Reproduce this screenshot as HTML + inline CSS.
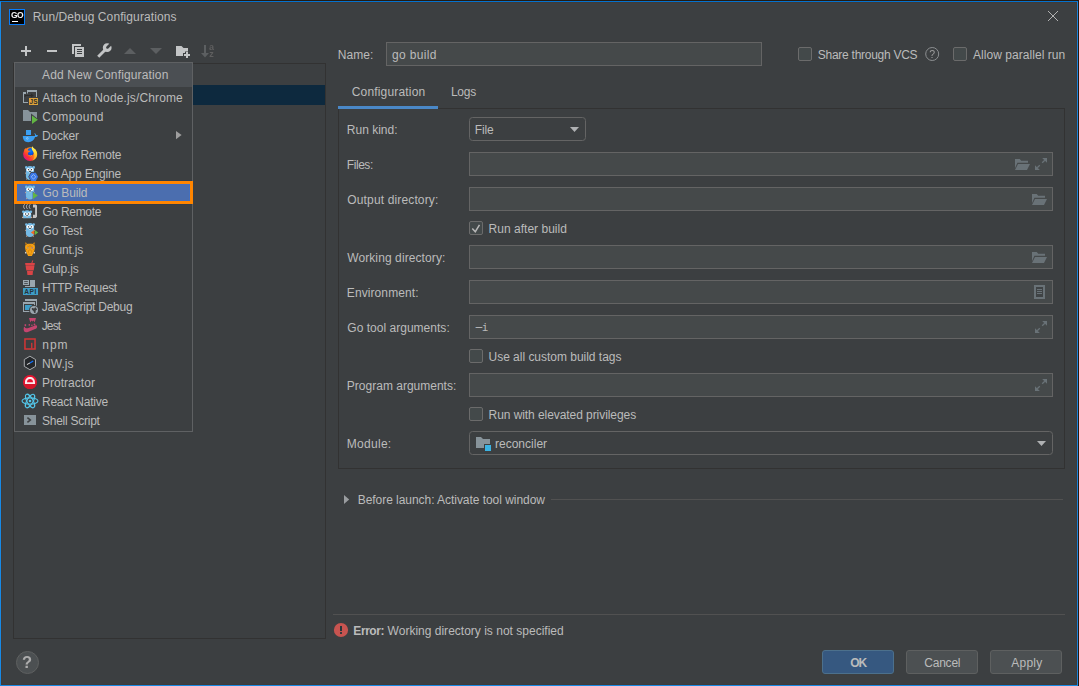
<!DOCTYPE html>
<html><head><meta charset="utf-8"><title>Run/Debug Configurations</title>
<style>
*{box-sizing:border-box;margin:0;padding:0}
html,body{width:1079px;height:686px;overflow:hidden;background:#3c3f41}
body{position:relative;font-family:"Liberation Sans",sans-serif;font-size:12px;color:#bbbbbb}
.a,.t,.in,.cb,.btn,svg{position:absolute}
.t{white-space:nowrap;line-height:16px;height:16px}
.in{background:#45494a;border:1px solid #646464;height:24px;left:469px;width:584px}
.co{background:#3c3f41;border-radius:3.5px}
.cb{width:14px;height:14px;background:#43494a;border:1px solid #6b6b6b;border-radius:2px}
.btn{height:24px;width:72px;border-radius:3px;border:1px solid #5e6060;background:#4c5052;top:650px}
</style></head><body>
<!-- window frame -->
<div class="a" style="left:0;top:0;width:1079px;height:1px;background:#241b12"></div>
<div class="a" style="left:1078px;top:0;width:1px;height:686px;background:#221a12"></div>
<div class="a" style="left:0;top:1px;width:1078px;height:685px;border:1px solid #1789e5;border-top-color:#0372cf;border-right-color:#1a83dc"></div>
<div class="a" style="left:1px;top:2px;width:1076px;height:683px;border:1px solid #403b38"></div>

<!-- title bar -->
<div class="a" style="left:9px;top:9px;width:16px;height:16px;background:#000;border:1px solid #087cfa"></div>
<div class="t" style="left:11px;top:9px;font-size:8.5px;font-weight:bold;color:#f4f4f4;line-height:12px;height:12px;letter-spacing:-0.5px;filter:grayscale(1)">GO</div>
<div class="a" style="left:12px;top:21px;width:6px;height:1px;background:#fff"></div>
<div class="t" style="left:32.85px;top:9px;letter-spacing:0.096px;">Run/Debug Configurations</div>

<!-- configurations tree -->
<div class="a" style="left:13px;top:63px;width:313px;height:576px;border:1px solid #323232"></div>
<div class="a" style="left:14px;top:85px;width:311px;height:20px;background:#0d293e"></div>

<!-- add new configuration popup -->
<div class="a" style="left:14px;top:62px;width:179px;height:370px;background:#3c3f41;border:1px solid #5f6163"></div>
<div class="a" style="left:15px;top:63px;width:177px;height:24px;background:#4b4f53"></div>
<div class="t" style="left:42.07px;top:67px;letter-spacing:0.143px;">Add New Configuration</div>
<div class="a" style="left:15px;top:180px;width:177px;height:25px;background:#333d49"></div>
<div class="a" style="left:14px;top:181px;width:179px;height:23px;background:#4b6eaf;border:3px solid #ff8500;box-shadow:inset 0 0 0 1px #426fc0"></div>
<div class="t" style="left:42.27px;top:90px;letter-spacing:0.134px;">Attach to Node.js/Chrome</div><div class="t" style="left:42.31px;top:109px;letter-spacing:0.351px;">Compound</div><div class="t" style="left:41.95px;top:128px;letter-spacing:-0.173px;">Docker</div><div class="t" style="left:41.95px;top:147px;letter-spacing:-0.193px;">Firefox Remote</div><div class="t" style="left:42.5px;top:166px;letter-spacing:-0.163px;">Go App Engine</div><div class="t" style="left:42.5px;top:185px;letter-spacing:-0.165px;">Go Build</div><div class="t" style="left:42.5px;top:204px;letter-spacing:-0.305px;">Go Remote</div><div class="t" style="left:42.5px;top:223px;letter-spacing:-0.19px;">Go Test</div><div class="t" style="left:42.5px;top:242px;letter-spacing:-0.188px;">Grunt.js</div>
<div class="t" style="left:42.5px;top:261px;letter-spacing:-0.198px;">Gulp.js</div><div class="t" style="left:41.95px;top:280px;letter-spacing:-0.354px;">HTTP Request</div><div class="t" style="left:41.69px;top:299px;letter-spacing:-0.256px;">JavaScript Debug</div><div class="t" style="left:41.69px;top:318px;letter-spacing:-0.844px;">Jest</div><div class="t" style="left:42.23px;top:337px;letter-spacing:0.985px;">npm</div><div class="t" style="left:41.95px;top:356px;letter-spacing:0.089px;">NW.js</div><div class="t" style="left:41.95px;top:375px;letter-spacing:0.035px;">Protractor</div><div class="t" style="left:41.95px;top:394px;letter-spacing:-0.219px;">React Native</div><div class="t" style="left:42.03px;top:413px;letter-spacing:-0.256px;">Shell Script</div>

<!-- name row -->
<div class="t" style="left:337.85px;top:47px;letter-spacing:0.036px;">Name:</div>
<div class="in" style="left:386px;top:42px;width:376px"></div>
<div class="t" style="left:392.05px;top:47px;letter-spacing:0.328px;">go build</div>
<div class="cb" style="left:798px;top:47px"></div><div class="t" style="left:817.83px;top:47px;letter-spacing:-0.269px;">Share through VCS</div>
<div class="cb" style="left:953px;top:47px"></div><div class="t" style="left:973.07px;top:47px;letter-spacing:0.045px;">Allow parallel run</div>

<!-- tabs -->
<div class="t" style="left:351.71px;top:84px;letter-spacing:0.177px;">Configuration</div><div class="t" style="left:450.95px;top:84px;letter-spacing:-0.256px;">Logs</div>
<div class="a" style="left:338px;top:108px;width:727px;height:361px;border:1px solid #323232"></div>
<div class="a" style="left:338px;top:106px;width:100px;height:3px;background:#4a88c7"></div>

<!-- form -->
<div class="t" style="left:346.85px;top:122px;letter-spacing:-0.008px;">Run kind:</div>
<div class="in co" style="top:117px;width:117px"></div><div class="t" style="left:474.75px;top:122px;letter-spacing:-0.098px;">File</div>
<div class="t" style="left:346.85px;top:157px;letter-spacing:-0.453px;">Files:</div><div class="in" style="top:152px"></div>
<div class="t" style="left:347.33px;top:192px;letter-spacing:0.141px;">Output directory:</div><div class="in" style="top:187px"></div>
<div class="cb" style="left:469px;top:221px"></div><div class="t" style="left:488.55px;top:221px;letter-spacing:0.021px;">Run after build</div>
<div class="t" style="left:347.19px;top:250px;letter-spacing:0.1px;">Working directory:</div><div class="in" style="top:245px"></div>
<div class="t" style="left:346.85px;top:285px;letter-spacing:0.085px;">Environment:</div><div class="in" style="top:280px"></div>
<div class="t" style="left:347.3px;top:320px;letter-spacing:0.022px;">Go tool arguments:</div><div class="in" style="top:315px"></div><div class="t" style="left:473.5px;top:320px;font-family:'DejaVu Sans Mono','Liberation Mono',monospace;font-size:11px"><span style="display:inline-block;transform:translate(0,-1px) scaleX(2.4);transform-origin:2.1px 50%">-</span><span style="margin-left:1.7px">i</span></div>
<div class="cb" style="left:469px;top:349px"></div><div class="t" style="left:488.53px;top:349px;letter-spacing:-0.019px;">Use all custom build tags</div>
<div class="t" style="left:346.85px;top:378px;letter-spacing:0.003px;">Program arguments:</div><div class="in" style="top:373px"></div>
<div class="cb" style="left:469px;top:407px"></div><div class="t" style="left:488.55px;top:407px;letter-spacing:-0.066px;">Run with elevated privileges</div>
<div class="t" style="left:346.85px;top:436px;letter-spacing:0.272px;">Module:</div><div class="in co" style="top:431px"></div><div class="t" style="left:494.94px;top:436px;letter-spacing:0.017px;">reconciler</div>

<!-- before launch -->
<div class="t" style="left:357.75px;top:492px;letter-spacing:-0.047px;">Before launch: Activate tool window</div>
<div class="a" style="left:551px;top:499px;width:512px;height:1px;background:#515151"></div>

<!-- bottom -->
<div class="a" style="left:333px;top:614px;width:732px;height:1px;background:#515151"></div>
<div class="t" style="left:353.34px;top:623px;letter-spacing:-0.437px;font-weight:bold;">Error:</div><div class="t" style="left:387.59px;top:623px;letter-spacing:0.008px;">Working directory is not specified</div>
<div class="a" style="left:16px;top:651px;width:23px;height:23px;border-radius:12px;background:#4c5052;border:1px solid #5e6060"></div>
<div class="t" style="left:17px;width:20px;text-align:center;top:652px;font-size:16.5px;font-weight:bold;color:#adadad;line-height:20px;height:20px;filter:grayscale(1)">?</div>
<div class="btn" style="left:822px;background:#365880;border-color:#4c708c"></div><div class="t" style="left:850.16px;top:655px;letter-spacing:-0.961px;font-weight:bold;">OK</div>
<div class="btn" style="left:906px"></div><div class="t" style="left:924.31px;top:655px;letter-spacing:-0.231px;">Cancel</div>
<div class="btn" style="left:990px"></div><div class="t" style="left:1011.17px;top:655px;letter-spacing:0.281px;">Apply</div>
<svg style="left:0;top:0" width="1079" height="686" viewBox="0 0 1079 686">
<defs><g id="gopher">
<circle cx="1.3" cy="1.9" r="1.3" fill="#74b9e4"/><circle cx="8.7" cy="1.9" r="1.3" fill="#74b9e4"/>
<path d="M0.9 5c0-3 1.8-4.6 4.1-4.6s4.1 1.6 4.1 4.6v6c0 2.4-1.8 3.4-4.1 3.4s-4.1-1-4.1-3.4z" fill="#74b9e4"/>
<circle cx="0.6" cy="7.6" r="0.55" fill="#d9a88c"/><circle cx="9.4" cy="7.6" r="0.55" fill="#d9a88c"/>
<circle cx="1.7" cy="13.6" r="0.6" fill="#d9a88c"/><circle cx="8.3" cy="13.6" r="0.6" fill="#d9a88c"/>
<circle cx="3.2" cy="4.2" r="1.75" fill="#fff"/><circle cx="6.8" cy="4.2" r="1.75" fill="#fff"/>
<circle cx="3.5" cy="4.2" r="0.65" fill="#333"/><circle cx="6.5" cy="4.2" r="0.65" fill="#333"/>
<ellipse cx="5" cy="6.6" rx="0.9" ry="0.8" fill="#e8e8e8"/>
<ellipse cx="5" cy="5.9" rx="0.9" ry="0.55" fill="#333"/>
</g>
<linearGradient id="ffg" x1="0.9" y1="0.2" x2="0.1" y2="0.85"><stop offset="0" stop-color="#ffb52a"/><stop offset="0.4" stop-color="#ff7a16"/><stop offset="0.75" stop-color="#ff2a3c"/><stop offset="1" stop-color="#d3129a"/></linearGradient>
<radialGradient id="ffb" cx="0.5" cy="0.35" r="0.7"><stop offset="0" stop-color="#0a7cff"/><stop offset="0.7" stop-color="#0050e0"/><stop offset="1" stop-color="#2a1fa0"/></radialGradient>
<clipPath id="gr"><rect x="20" y="209" width="14" height="9.2"/></clipPath>
<linearGradient id="ffy" x1="0.3" y1="0" x2="0.6" y2="1"><stop offset="0" stop-color="#fff45a"/><stop offset="0.55" stop-color="#ffd530"/><stop offset="1" stop-color="#ff9a1a"/></linearGradient>
<linearGradient id="ffo" x1="0.7" y1="0" x2="0.2" y2="1"><stop offset="0" stop-color="#ff9d1c"/><stop offset="0.5" stop-color="#ff5a22"/><stop offset="1" stop-color="#f0203c"/></linearGradient>
</defs>

<!-- 1 attach to node -->
<g fill="#9aa6ae">
<path d="M27 90h10v7h-1v-5h-8v1.5h-1z"/>
<path d="M23 92h3v2h-2v8h4v1h-5z"/>
</g>
<path d="M25 97v-1.5h6.5" stroke="#2b2b2b" stroke-width="1" fill="none"/><path d="M31 93.4l2.8 2.1-2.8 2.1z" fill="#2b2b2b"/>
<rect x="29" y="98" width="9" height="7" fill="#dea33b"/>
<text x="33.5" y="104" font-size="6.4" font-weight="bold" text-anchor="middle" fill="#2b2b2b" font-family="Liberation Sans, sans-serif">JS</text>

<!-- 2 compound -->
<path d="M23 110h5l2 2h7v9h-14z" fill="#87939a"/>
<path d="M31 113.5l8 6.3-8 6z" fill="#3c3f41"/>
<path d="M32 115.5l5.9 4.3-5.9 4.3z" fill="#62b543"/>

<!-- 3 docker -->
<rect x="26" y="130" width="5" height="5" fill="#3a9ff2"/>
<path d="M22.8 136.1h12.1c0.3-1.5-0.1-2.4-0.7-3.2 1.1 0.3 1.8 1.1 2 2.2 0.7-0.1 1.3 0 1.8 0.4-0.6 1.2-1.6 1.6-2.9 1.5-1.1 3.4-3.4 5.2-6.9 5.2-3.6 0-5.4-2.3-5.4-6.1z" fill="#3a9ff2"/>
<circle cx="27.3" cy="138.4" r="0.9" fill="none" stroke="#bfe0fa" stroke-width="0.5"/>

<!-- 4 firefox -->
<circle cx="30" cy="154.1" r="6.9" fill="url(#ffg)"/>
<ellipse cx="30.6" cy="152" rx="3.1" ry="3.9" fill="url(#ffb)"/>
<path d="M32.2 146.2c0.6 1.1 1.5 1.8 2.6 2.8 1.5 1.4 2.4 3.1 2.4 5.2 0 1.7-0.6 3.2-1.6 4.4-0.9 1-2 1.7-3.2 2.1 1.5-1.6 2.2-3.3 2.1-5.3-0.1-1.8-0.9-3.2-1.9-4.6-0.9-1.3-1.2-2.7-0.4-4.6z" fill="url(#ffy)"/>
<path d="M24.5 149.6c0.3-0.6 0.7-1.1 1.1-1.5 0.2 0.8 0.5 1.2 1 1.6 0.8 0.1 1.5 0.4 2 1 0.7-0.1 1.4 0 2 0.4-0.7 0.7-1.9 0.8-2.4 1.7-0.6 1.1 0 2.3 1.2 2.7 1.3 0.4 2.6-0.1 3.4-0.9 0 2.2-1.9 3.6-4 3.3-2.6-0.3-4.4-2.5-4.5-5.1 0-1.2 0-2.2 0.2-3.2z" fill="url(#ffo)"/>
<path d="M28.2 155.3c1.5 0.6 2.9 0.4 4.1-0.4-0.6 1.4-2.6 1.9-4.1 0.4z" fill="#ffd43a"/>

<!-- 5 go app engine -->
<use href="#gopher" x="25" y="165.5"/>
<path d="M28.3 176.8l2.6-4.7h5.2l2.6 4.7-2.3 4.2h-5.8z" fill="#3c3f41"/>
<path d="M29 176.8l2.3-4.1h4.5l2.3 4.1-2.3 4.1h-4.5z" fill="#3b78e7"/>
<path d="M33.5 174.5l2.3 2.3-2.3 2.3-2.3-2.3z" fill="none" stroke="#8fb6f5" stroke-width="1"/>

<!-- 6 go build -->
<use href="#gopher" x="25" y="185"/>
<path d="M32.5 191.3l6.2 4.3-6.2 4.3z" fill="#4b6eaf"/>
<path d="M33 192.2l4.9 3.4-4.9 3.4z" fill="#62b543"/>

<!-- 7 go remote -->
<g fill="none" stroke="#bdbdbd" stroke-width="1"><path d="M24.6 204.3c-1.3 1.3-1.3 3.2 0 4.5"/><path d="M27.4 204.3c-1.3 1.3-1.3 3.2 0 4.5"/><path d="M30.2 204.3c-1.3 1.3-1.3 3.2 0 4.5"/></g>
<path d="M33 204.5h2.8l1.2 1v11.3l-1.2 1.2h-2.8v-3.2h2.1v-7.2h-2.1z" fill="#c4c4c4"/>
<g clip-path="url(#gr)"><g transform="translate(22,209.8) scale(1.02,1)"><use href="#gopher"/></g></g>
<circle cx="22.6" cy="217.4" r="0.6" fill="#d9a88c"/><circle cx="31.7" cy="217.4" r="0.6" fill="#d9a88c"/>

<!-- 8 go test -->
<use href="#gopher" x="25" y="222.6"/>
<path d="M34.3 229.9v5l-3.4-2.5z" fill="#f26a22"/>
<path d="M34.9 229.9v5.2l3.3-2.6z" fill="#62b543"/>

<!-- 9 grunt -->
<path d="M25.2 242.3c0.9 0.2 1.6 0.8 1.9 1.7l-1.4 1c-0.6-0.8-0.7-1.7-0.5-2.7z M34.8 242.3c-0.9 0.2-1.6 0.8-1.9 1.7l1.4 1c0.6-0.8 0.7-1.7 0.5-2.7z" fill="#c07a12"/>
<path d="M27.6 243.8h4.8l2.4 1.7c0.3 1.5 0.2 3-0.3 4.5l-1.1 3-1.5 2.9h-3.8l-1.5-2.9-1.1-3c-0.5-1.5-0.6-3-0.3-4.5z" fill="#f7a214"/>
<path d="M28.6 244.8l1.4 0.8 1.4-0.8M27.3 246l2.7 1 2.7-1M25.6 248.6l1.3 1.3M34.4 248.6l-1.3 1.3M28.4 250.2v2.6M31.6 250.2v2.6M30 248.5v2.5M28.4 254.2h3.2" stroke="#cf7f0c" stroke-width="0.7" fill="none"/>
<rect x="27.1" y="247.2" width="1.4" height="1.3" fill="#9a8f86"/><rect x="31.5" y="247.2" width="1.4" height="1.3" fill="#8a6fa8"/>
<path d="M24.9 251.6l2 1.3-1.5 0.9z M35.1 251.6l-2 1.3 1.5 0.9z" fill="#f4eee6"/>

<!-- 10 gulp -->
<g fill="#db4446">
<path d="M25.1 263h9.8l-0.3 1.9h-9.2z"/><path d="M25.5 265.2h9l-0.8 5.2h-7.4z"/><path d="M27 271h6l-0.4 4h-5.2z"/>
<path d="M31.1 263.4l1.3-3.2 0.9 0.3-1.2 3.2z"/>
</g>

<!-- 11 http request -->
<g fill="#9aa6ae"><rect x="23" y="280" width="6" height="5"/><path d="M30 280h5v7h-10v-1h5z"/></g>
<rect x="24.2" y="281.2" width="3.6" height="0.8" fill="#3c3f41"/><rect x="24.2" y="283" width="3.6" height="0.8" fill="#3c3f41"/>
<rect x="23" y="288" width="15" height="7" fill="#3e9dc7"/>
<text x="30.5" y="294.2" font-size="6.6" font-weight="bold" text-anchor="middle" fill="#263238" font-family="Liberation Sans, sans-serif" letter-spacing="0.5">API</text>

<!-- 12 js debug -->
<g fill="#9aa6ae"><path d="M25 299h12v7h-1v-5h-11z"/><path fill-rule="evenodd" d="M23 302h12v10h-12z M24 304h10v7h-10z"/></g>
<rect x="25" y="305" width="7" height="5" fill="#3e9dc7"/>
<circle cx="34" cy="310" r="4.9" fill="#3c3f41"/><circle cx="34" cy="310" r="4" fill="#9aa6ae"/>
<path d="M31.8 308.2c1-0.6 1.6 0.4 2.4 0.2 0.7-0.2 0.6-1.2 1.5-1 0.6 0.6 1.3 1.6 1.3 2.6-0.8-0.3-1.3 0.2-1.4 0.9-0.1 0.8 0.4 1.4-0.3 2.1-1.2 0.3-1.5-0.7-1.6-1.5-0.1-0.9-0.9-0.8-1.4-1.5-0.4-0.6-0.7-1.2-0.5-1.8z" fill="#3c3f41"/>

<!-- 13 jest -->
<g fill="#c4456f">
<path d="M29 318h7l-1.3 4.6-1.1-2.2-1.1 1.2-1.1-1.2-1.1 2.2z"/>
<rect x="24.6" y="324.2" width="1.5" height="2"/><circle cx="29.3" cy="324.9" r="0.8"/><circle cx="31.9" cy="325.3" r="0.8"/><circle cx="34.5" cy="324.5" r="0.9"/>
<path d="M23.7 328c0-0.7 0.5-1.2 1.1-1.1 0.5 1.4 1.6 1.7 2.9 1.3l7.5-2.8c1-0.3 1.9 0.2 1.9 1.3 0 1.2-0.8 1.9-2 2.4l-7.2 2.9c-1.6 0.6-3.1 0.4-3.8-0.7-0.5-0.9-0.5-2-0.4-3.3z"/>
</g>

<!-- 14 npm -->
<path fill-rule="evenodd" d="M24.2 338.2h11.6v11.6h-11.6z M25.7 339.7v8.6h8.6v-8.6z" fill="#d33636"/><rect x="31.1" y="342.8" width="1.3" height="5.6" fill="#d33636"/>

<!-- 15 nw.js -->
<path d="M29.9 356.2l5.6 3.3v6.9l-5.6 3.3-5.6-3.3v-6.9z" fill="#24272a" stroke="#a9abad" stroke-width="1"/>
<path d="M26.9 364.6l3.2-1.7" stroke="#dcdcdc" stroke-width="1"/><path d="M30 363l3.2-2" stroke="#1373ff" stroke-width="1.3"/>

<!-- 16 protractor -->
<circle cx="30" cy="382" r="7" fill="#e8132f"/>
<path d="M23.3 384h13.4a7 7 0 0 1-13.4 0z" fill="#d3172c"/>
<path fill-rule="evenodd" d="M25 384v-1.5c0-3.4 2.1-5.4 5-5.4s5 2 5 5.4v1.5z M27 382.2h6c0-2-1.3-3.1-3-3.1s-3 1.1-3 3.1z" fill="#fbeaed"/>

<!-- 17 react -->
<g fill="none" stroke="#53c7ea" stroke-width="1.1"><ellipse cx="30" cy="401" rx="8" ry="3.1"/><ellipse cx="30" cy="401" rx="7.6" ry="3" transform="rotate(60 30 401)"/><ellipse cx="30" cy="401" rx="7.6" ry="3" transform="rotate(120 30 401)"/></g>
<circle cx="30" cy="401" r="1.3" fill="#53c7ea"/>

<!-- 18 shell -->
<rect x="24" y="415" width="12" height="10" fill="#87939a"/>
<path d="M27.4 417.6l2.9 2.4-2.9 2.4" fill="none" stroke="#3c3f41" stroke-width="1.6"/>

<!-- docker submenu arrow -->
<path d="M176 131l5.6 4.1-5.6 4.1z" fill="#9e9e9e"/>

<!-- toolbar -->
<g fill="#c3c5c6">
<rect x="21" y="50" width="10" height="2"/><rect x="25" y="46" width="2" height="10"/>
<rect x="47" y="50" width="10" height="2"/>
<path d="M72 44h9v2h-7v8h-2z"/>
<path fill-rule="evenodd" d="M75 47h9v10h-9z M77 49v1h5v-1z M77 51v1h5v-1z M77 53v1h5v-1z"/>
<path d="M176 46h5.5l2 2h4.5v3.4h-3v1.6h-2v3h-7z"/><rect x="184" y="54" width="6" height="2"/><rect x="186" y="52" width="2" height="6"/>
</g>
<g transform="translate(107.2 47.7) rotate(-45)">
<rect x="-12.7" y="-1.45" width="12.7" height="2.9" fill="#c3c5c6"/>
<circle cx="0" cy="0" r="4.4" fill="#c3c5c6"/>
<path d="M0.3-1.3h6v2.6h-6a1.3 1.3 0 0 1 0-2.6z" fill="#3c3f41"/>
</g>
<g fill="#5c5f61">
<path d="M124 54l6-6 6 6z"/><path d="M150 48l6 6 6-6z"/>
<rect x="204" y="45" width="2" height="9"/><path d="M201 53h8l-4 4.5z"/>
</g>
<g style="filter:grayscale(1)"><text x="209" y="50" font-size="9" font-weight="bold" fill="#5c5f61" font-family="Liberation Sans, sans-serif">a</text>
<text x="209.3" y="57" font-size="9" font-weight="bold" fill="#5c5f61" font-family="Liberation Sans, sans-serif">z</text></g>

<!-- close -->
<path d="M1048 11l10 10M1058 11l-10 10" stroke="#b2b2b2" stroke-width="1" fill="none"/>

<!-- help icon -->
<circle cx="932.2" cy="54" r="6.5" fill="none" stroke="#8c8f91" stroke-width="1"/>
<text x="932.2" y="57.8" font-size="10.5" text-anchor="middle" fill="#9a9da0" font-family="Liberation Sans, sans-serif" style="filter:grayscale(1)">?</text>

<!-- field icons -->
<g transform="translate(1015,159)" fill="#697277"><path d="M0 0h4.8l1.4 1.8h6.8v2h-10.6l-2.4 5.5z"/><path d="M3 5h12l-3 6h-12z"/></g><g transform="translate(1035,158)" fill="#697277" stroke="none"><path d="M7.2 0h4.8v4.8z"/><path d="M0 7.2v4.8h4.8z"/><path d="M9.8 2.2L7.2 4.8M2.2 9.8L4.8 7.2" stroke="#697277" stroke-width="1.3" fill="none"/></g>
<g transform="translate(1032,194)" fill="#697277"><path d="M0 0h4.8l1.4 1.8h6.8v2h-10.6l-2.4 5.5z"/><path d="M3 5h12l-3 6h-12z"/></g>
<g transform="translate(1032,252)" fill="#697277"><path d="M0 0h4.8l1.4 1.8h6.8v2h-10.6l-2.4 5.5z"/><path d="M3 5h12l-3 6h-12z"/></g>
<path fill-rule="evenodd" d="M1034 285h11v14h-11z M1036 287v10h7v-10z M1037 289h5v1h-5z M1037 291h5v1h-5z M1037 293h5v1h-5z" fill="#697277"/>
<rect x="1036" y="287" width="7" height="10" fill="#3f4345"/><path d="M1037 289h5v1h-5z M1037 291h5v1h-5z M1037 293h5v1h-5z" fill="#697277"/>
<g transform="translate(1035,321)" fill="#697277" stroke="none"><path d="M7.2 0h4.8v4.8z"/><path d="M0 7.2v4.8h4.8z"/><path d="M9.8 2.2L7.2 4.8M2.2 9.8L4.8 7.2" stroke="#697277" stroke-width="1.3" fill="none"/></g>
<g transform="translate(1035,379)" fill="#697277" stroke="none"><path d="M7.2 0h4.8v4.8z"/><path d="M0 7.2v4.8h4.8z"/><path d="M9.8 2.2L7.2 4.8M2.2 9.8L4.8 7.2" stroke="#697277" stroke-width="1.3" fill="none"/></g>

<!-- combos arrows -->
<path d="M570 127h9l-4.5 5z" fill="#afb1b3"/>
<path d="M1037 441h9l-4.5 5z" fill="#afb1b3"/>

<!-- checkmark -->
<path d="M472.3 228.4l3 3.3 4.2-6.9" fill="none" stroke="#b8b8b8" stroke-width="1.5"/>

<!-- module icon -->
<path d="M476 437h5l2 2h7v5h-6v4h-8z" fill="#87939a"/>
<rect x="485" y="445" width="6" height="6" fill="#3bb3e3"/>

<!-- before launch arrow -->
<path d="M344 495l5.2 4.5-5.2 4.5z" fill="#9a9da0"/>

<!-- error icon -->
<circle cx="341" cy="630" r="7.1" fill="#c75450"/><rect x="340" y="626" width="2" height="5" fill="#27373b"/><rect x="340" y="632.1" width="2" height="1.8" fill="#27373b"/>
</svg>
</body></html>
